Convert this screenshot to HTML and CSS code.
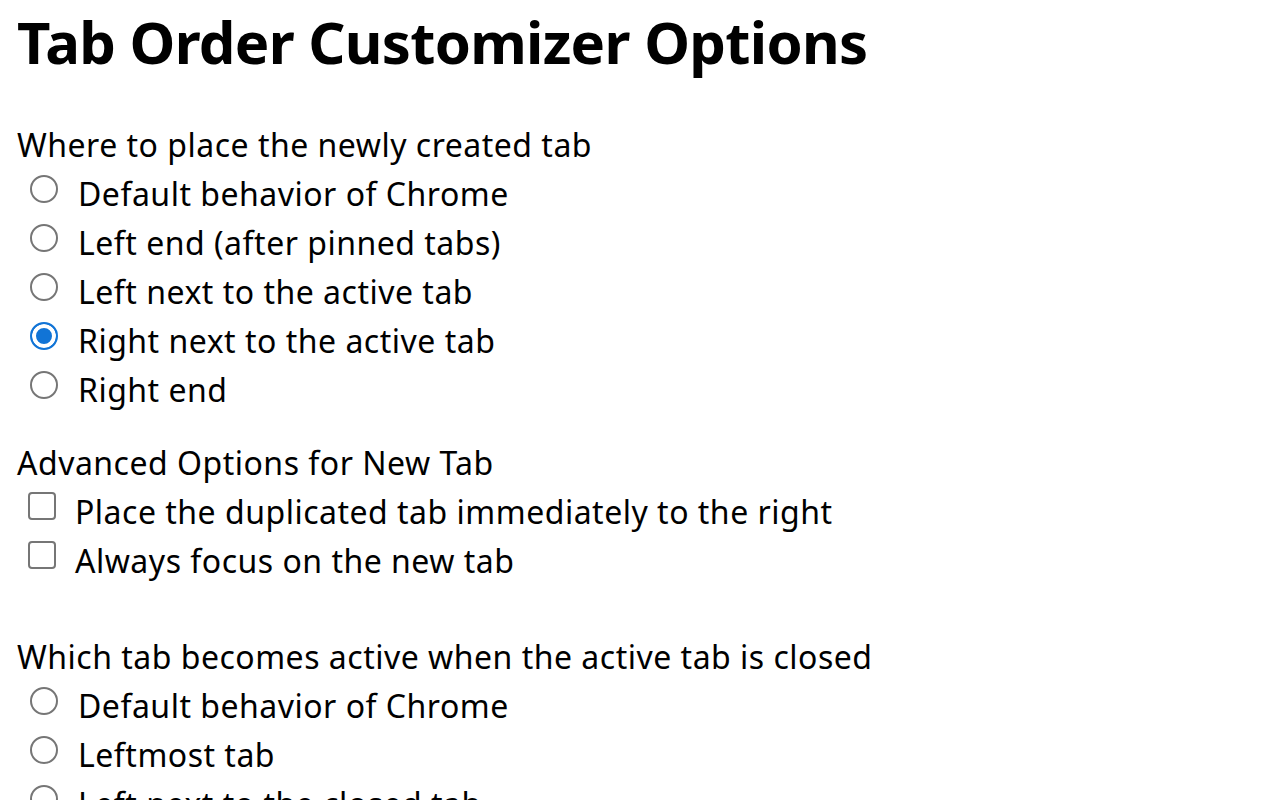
FILE: index.html
```html
<!DOCTYPE html>
<html lang="en">
<head>
    <meta charset="UTF-8">
    <title>Tab Order Customizer Options</title>
    <link rel="stylesheet" href="styles.css">
</head>
<body>

    <h1>Tab Order Customizer Options</h1>

    <div class="group">
        <div class="group-title">Where to place the newly created tab</div>
        <label class="option"><input type="radio" name="newTab" value="default">Default behavior of Chrome</label>
        <label class="option"><input type="radio" name="newTab" value="first">Left end (after pinned tabs)</label>
        <label class="option"><input type="radio" name="newTab" value="left">Left next to the active tab</label>
        <label class="option"><input type="radio" name="newTab" value="right" checked>Right next to the active tab</label>
        <label class="option"><input type="radio" name="newTab" value="last">Right end</label>
    </div>

    <div class="group">
        <div class="group-title">Advanced Options for New Tab</div>
        <label class="option check"><input type="checkbox" id="duplicateRight">Place the duplicated tab immediately to the right</label>
        <label class="option check"><input type="checkbox" id="focusNew">Always focus on the new tab</label>
    </div>

    <div class="group spaced">
        <div class="group-title">Which tab becomes active when the active tab is closed</div>
        <label class="option"><input type="radio" name="closedTab" value="default">Default behavior of Chrome</label>
        <label class="option"><input type="radio" name="closedTab" value="first">Leftmost tab</label>
        <label class="option"><input type="radio" name="closedTab" value="left">Left next to the closed tab</label>
        <label class="option"><input type="radio" name="closedTab" value="right">Right next to the closed tab</label>
        <label class="option"><input type="radio" name="closedTab" value="last">Rightmost tab</label>
    </div>

</body>
</html>
```

FILE: styles.css
```css
body {
    font-family: "Noto Sans", "Open Sans", sans-serif;
    font-size: 32px;
    color: #000;
    background: #fff;
    margin: 0;
    padding: 6px 17px;
}

h1 {
    font-size: 58px;
    font-weight: bold;
    line-height: 72px;
    margin: 0 0 42px;
    letter-spacing: -0.7px;
}

.group-title,
.option {
    line-height: 49px;
    letter-spacing: 0.5px;
}

.group + .group {
    margin-top: 24px;
}

.group.spaced {
    margin-top: 47px;
}

.option {
    display: flex;
    align-items: center;
}

.option input {
    appearance: none;
    -webkit-appearance: none;
    box-sizing: border-box;
    width: 28px;
    height: 28px;
    border: 2px solid #767676;
    background: #fff;
    flex-shrink: 0;
}

input[type="radio"] {
    border-radius: 50%;
    margin: 0 20px 9px 13px;
}

input[type="radio"]:checked {
    border-color: #1174d6;
    background: #1174d6;
    box-shadow: inset 0 0 0 4px #fff;
}

input[type="checkbox"] {
    border-radius: 4px;
    margin: 0 19px 11px 11px;
}
```
